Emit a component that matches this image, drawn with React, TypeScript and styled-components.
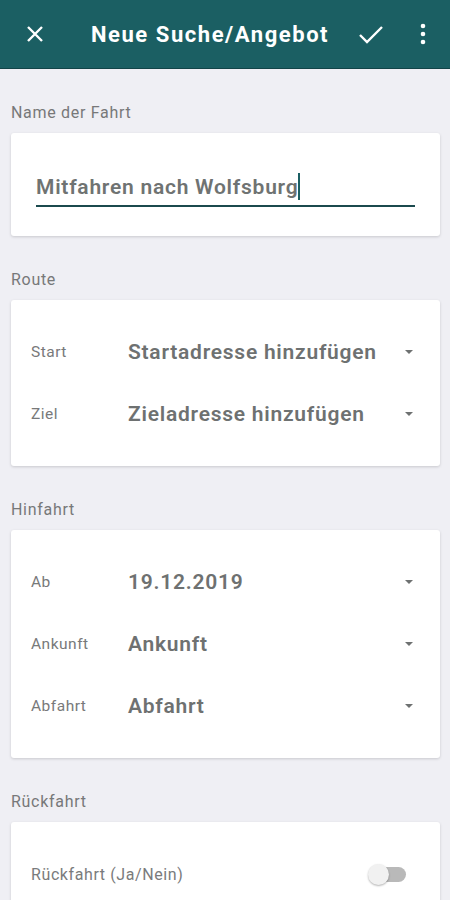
import React, { useState } from "react";
import styled, { createGlobalStyle } from "styled-components";

const GlobalStyle = createGlobalStyle`
  html, body {
    margin: 0;
    padding: 0;
    background: #efeff4;
    font-family: Roboto, "Noto Sans", sans-serif;
  }
`;

const Page = styled.div`
  width: 450px;
  min-height: 900px;
  background: #efeff4;
`;

const Toolbar = styled.header`
  height: 69px;
  background: #1b5f63;
  border-bottom: 1px solid #124448;
  display: flex;
  align-items: center;
  color: #fff;
  padding: 0 24px 0 25px;
  box-sizing: border-box;
`;

const Title = styled.h1`
  flex: 1;
  margin: 0 0 0 46px;
  font-size: 22px;
  font-weight: 700;
  letter-spacing: 1.55px;
`;

const IconBtn = styled.span<{ $gap?: number }>`
  display: flex;
  align-items: center;
  justify-content: center;
  margin-right: ${(p) => p.$gap || 0}px;
`;

const Content = styled.main`
  padding: 0 10px 0 11px;
`;

const SectionLabel = styled.div`
  font-size: 16px;
  letter-spacing: 0.7px;
  color: #777879;
  padding: 35px 0 11px;
  line-height: 18px;
`;

const Card = styled.section<{ $pad?: string }>`
  background: #fff;
  border-radius: 3px;
  box-shadow: 0 1px 3px rgba(0, 0, 0, 0.16);
  padding: ${(p) => p.$pad || "20px 20px"};
`;

const NameInput = styled.div`
  margin: 0 25px 0 25px;
  padding: 40px 0 0;
  border-bottom: 2px solid #1b4a4e;
  height: 32px;
  box-sizing: content-box;
  font-size: 21px;
  letter-spacing: 0.75px;
  font-weight: 600;
  color: #6f7372;
  display: flex;
  align-items: flex-start;
  line-height: 28px;
`;

const Caret = styled.span`
  display: inline-block;
  width: 2px;
  height: 27px;
  background: #1b5f63;
`;

const Row = styled.div`
  display: flex;
  align-items: center;
  height: 62px;
`;

const RowLabel = styled.span`
  width: 97px;
  font-size: 15.5px;
  letter-spacing: 0.5px;
  color: #78797a;
`;

const RowValue = styled.span`
  flex: 1;
  font-size: 21px;
  letter-spacing: 0.75px;
  font-weight: 600;
  color: #6e7171;
`;

const DropCaret = styled.span`
  width: 0;
  height: 0;
  border-left: 4px solid transparent;
  border-right: 4px solid transparent;
  border-top: 4px solid #6e7171;
  margin-right: 27px;
`;

const SwitchLabel = styled.span`
  flex: 1;
  font-size: 16px;
  letter-spacing: 0.6px;
  color: #7a7b7c;
`;

const Track = styled.span`
  position: relative;
  width: 36px;
  height: 15px;
  border-radius: 8px;
  background: #b9b9b9;
  margin-right: 34px;
`;

const Knob = styled.span`
  position: absolute;
  left: -2px;
  top: -3px;
  width: 21px;
  height: 21px;
  border-radius: 50%;
  background: #f1f1f1;
  box-shadow: 0 1px 2px rgba(0, 0, 0, 0.3);
`;

const SelectRow = ({ label, value }: { label: string; value: string }) => (
  <Row>
    <RowLabel>{label}</RowLabel>
    <RowValue>{value}</RowValue>
    <DropCaret />
  </Row>
);

export default function App() {
  const [name] = useState("Mitfahren nach Wolfsburg");
  return (
    <Page>
      <GlobalStyle />
      <Toolbar>
        <IconBtn>
          <svg width="20" height="20" viewBox="0 0 20 20">
            <path d="M3 3 L17 17 M17 3 L3 17" stroke="#fff" strokeWidth="2.4" />
          </svg>
        </IconBtn>
        <Title>Neue Suche/Angebot</Title>
        <IconBtn $gap={36}>
          <svg width="26" height="22" viewBox="0 0 26 22">
            <path d="M2 12 L9 19 L24 4" stroke="#fff" strokeWidth="2.4" fill="none" />
          </svg>
        </IconBtn>
        <IconBtn>
          <svg width="6" height="22" viewBox="0 0 6 22">
            <circle cx="3" cy="3" r="2.3" fill="#fff" />
            <circle cx="3" cy="11" r="2.3" fill="#fff" />
            <circle cx="3" cy="19" r="2.3" fill="#fff" />
          </svg>
        </IconBtn>
      </Toolbar>
      <Content>
        <SectionLabel>Name der Fahrt</SectionLabel>
        <Card $pad="0 0 29px">
          <NameInput>
            {name}
            <Caret />
          </NameInput>
        </Card>
        <SectionLabel>Route</SectionLabel>
        <Card $pad="21px 0 21px 20px">
          <SelectRow label="Start" value="Startadresse hinzufügen" />
          <SelectRow label="Ziel" value="Zieladresse hinzufügen" />
        </Card>
        <SectionLabel>Hinfahrt</SectionLabel>
        <Card $pad="21px 0 21px 20px">
          <SelectRow label="Ab" value="19.12.2019" />
          <SelectRow label="Ankunft" value="Ankunft" />
          <SelectRow label="Abfahrt" value="Abfahrt" />
        </Card>
        <SectionLabel>Rückfahrt</SectionLabel>
        <Card $pad="21px 0 21px 20px">
          <Row>
            <SwitchLabel>Rückfahrt (Ja/Nein)</SwitchLabel>
            <Track>
              <Knob />
            </Track>
          </Row>
        </Card>
      </Content>
    </Page>
  );
}
